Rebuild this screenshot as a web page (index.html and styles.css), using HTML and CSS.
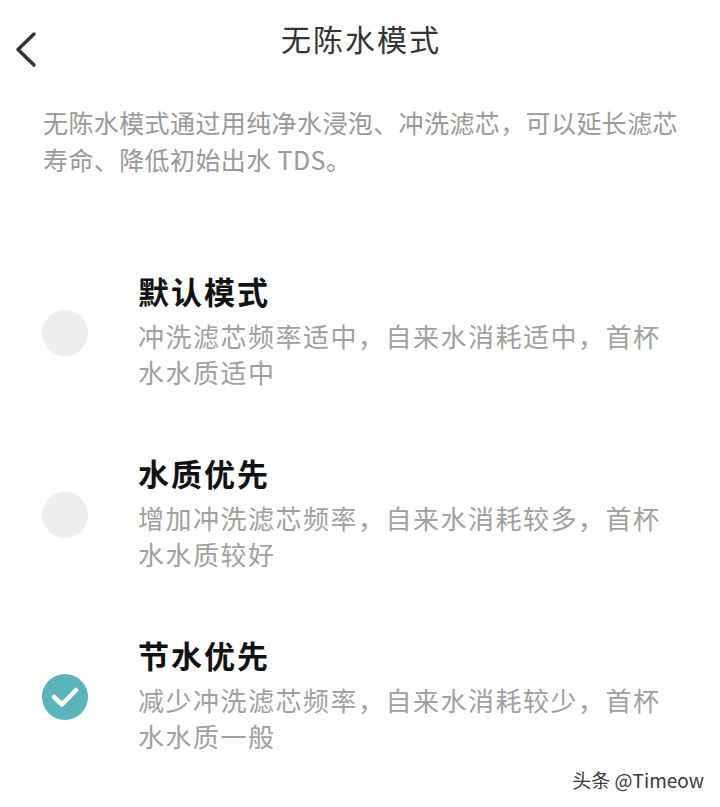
FILE: index.html
```html
<!DOCTYPE html>
<html lang="zh-CN">
<head>
    <meta charset="UTF-8">
    <meta name="viewport" content="width=device-width, initial-scale=1.0">
    <title>无陈水模式</title>
    <link rel="stylesheet" href="styles.css">
</head>
<body>

    <div class="header">
        <div class="back">
            <svg width="46" height="60" viewBox="0 0 46 60">
                <polyline points="34,24 18,39.5 34,55" fill="none" stroke="#333" stroke-width="3.5" stroke-linecap="round" stroke-linejoin="round"/>
            </svg>
        </div>
        <h1 class="title">无陈水模式</h1>
        <div></div>
    </div>

    <p class="desc">无陈水模式通过用纯净水浸泡、冲洗滤芯，可以延长滤芯寿命、降低初始出水 TDS。</p>

    <div class="modes">
        <div class="mode">
            <div class="radio"></div>
            <div class="mode-text">
                <div class="mode-name">默认模式</div>
                <div class="mode-info">冲洗滤芯频率适中，自来水消耗适中，首杯水水质适中</div>
            </div>
        </div>

        <div class="mode">
            <div class="radio"></div>
            <div class="mode-text">
                <div class="mode-name">水质优先</div>
                <div class="mode-info">增加冲洗滤芯频率，自来水消耗较多，首杯水水质较好</div>
            </div>
        </div>

        <div class="mode">
            <div class="radio checked">
                <svg width="46" height="46" viewBox="0 0 46 46">
                    <polyline points="12,23 20,30.5 34,16" fill="none" stroke="#fff" stroke-width="4.5" stroke-linecap="round" stroke-linejoin="round"/>
                </svg>
            </div>
            <div class="mode-text">
                <div class="mode-name">节水优先</div>
                <div class="mode-info">减少冲洗滤芯频率，自来水消耗较少，首杯水水质一般</div>
            </div>
        </div>
    </div>

    <div class="watermark">头条 @Timeow</div>

</body>
</html>
```

FILE: styles.css
```css
body {
    font-family: "Noto Sans CJK SC", "Noto Sans", sans-serif;
    background-color: #fff;
    margin: 0;
    padding: 0;
    width: 720px;
    height: 807px;
    position: relative;
    overflow: hidden;
}

.header {
    display: grid;
    grid-template-columns: 70px 1fr 70px;
    align-items: center;
    height: 80px;
}

.back {
    display: flex;
    align-items: center;
    height: 80px;
}

.back svg {
    display: block;
}

.title {
    margin: 0;
    text-align: center;
    font-size: 30px;
    font-weight: 400;
    letter-spacing: 2px;
    line-height: 76px;
    padding: 0 0 4px 2px;
    color: #333;
}

.desc {
    margin: 24px 30px 0 43px;
    font-size: 25px;
    letter-spacing: 0.4px;
    line-height: 37px;
    color: #999;
}

.modes {
    display: flex;
    flex-direction: column;
    gap: 62px;
    margin-top: 92px;
}

.mode {
    display: flex;
    align-items: center;
    gap: 50px;
    padding: 0 40px 0 42px;
}

.radio {
    flex: none;
    width: 46px;
    height: 46px;
    border-radius: 50%;
    background-color: #eeeeee;
    margin-top: 5px;
}

.radio.checked {
    background-color: #5bb4bc;
}

.radio svg {
    display: block;
}

.mode-text {
    flex: 1;
}

.mode-name {
    font-size: 31px;
    font-weight: 700;
    letter-spacing: 2px;
    line-height: 42px;
    color: #111;
    margin-bottom: 6px;
}

.mode-info {
    font-size: 26px;
    letter-spacing: 1.5px;
    line-height: 36px;
    color: #a0a0a0;
}

.watermark {
    position: absolute;
    right: 16px;
    bottom: 14px;
    font-size: 19px;
    color: #3a3a3a;
}
```
